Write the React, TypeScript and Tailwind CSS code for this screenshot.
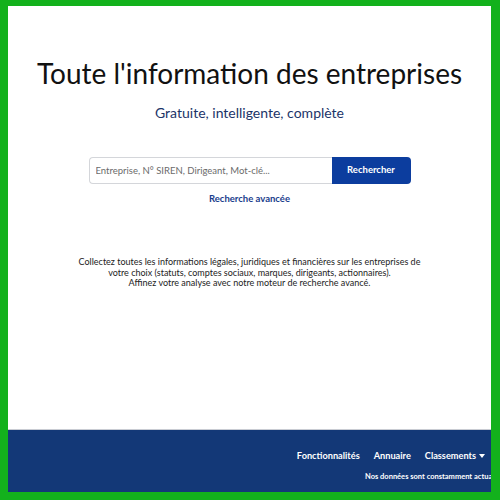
export default function App() {
  return (
    <div className="w-[500px] h-[500px] bg-[#13b11c] pl-2 pt-[6px] pr-[9px] pb-2">
      <div className="flex h-full flex-col overflow-hidden bg-white font-['Lato',sans-serif]">
        <main className="flex flex-1 flex-col items-center">
          <h1 className="mt-[49px] text-[28px] leading-[36px] text-[#111]">
            Toute l'information des entreprises
          </h1>
          <p className="mt-[13px] text-[14px] leading-[18px] text-[#1b3468]">
            Gratuite, intelligente, complète
          </p>

          <div className="mt-[35px] flex h-[27px] w-[322px]">
            <input
              className="h-full flex-1 rounded-l-[4px] border border-r-0 border-[#d4d6da] px-[6px] text-[9.5px] text-[#555] placeholder:text-[#6b6b6b] outline-none"
              placeholder="Entreprise, N° SIREN, Dirigeant, Mot-clé..."
            />
            <button className="h-full w-[79px] rounded-r-[4px] bg-[#0c3d9e] text-[9.5px] font-bold text-white">
              Rechercher
            </button>
          </div>
          <a className="mt-[8px] text-[9.5px] font-bold text-[#1a3d8c]">Recherche avancée</a>

          <div className="mt-[51px] text-center text-[9px] leading-[10.5px] text-[#222]">
            <p>Collectez toutes les informations légales, juridiques et financières sur les entreprises de</p>
            <p>votre choix (statuts, comptes sociaux, marques, dirigeants, actionnaires).</p>
            <p>Affinez votre analyse avec notre moteur de recherche avancé.</p>
          </div>
        </main>

        <footer className="h-[63px] shrink-0 border-t border-[#c9ccd3] bg-[#133877] text-white">
          <nav className="flex justify-end gap-[14px] pt-[19px] pr-[6px] text-[9.2px] font-bold">
            <a>Fonctionnalités</a>
            <a>Annuaire</a>
            <a className="flex items-center gap-[3px]">
              Classements
              <svg width="6" height="4" viewBox="0 0 6 4">
                <path d="M0 0h6L3 4z" fill="white" />
              </svg>
            </a>
          </nav>
          <p className="mt-[8px] whitespace-nowrap pl-[357px] text-[7.5px] font-bold">
            Nos données sont constamment actualisées
          </p>
        </footer>
      </div>
    </div>
  );
}
